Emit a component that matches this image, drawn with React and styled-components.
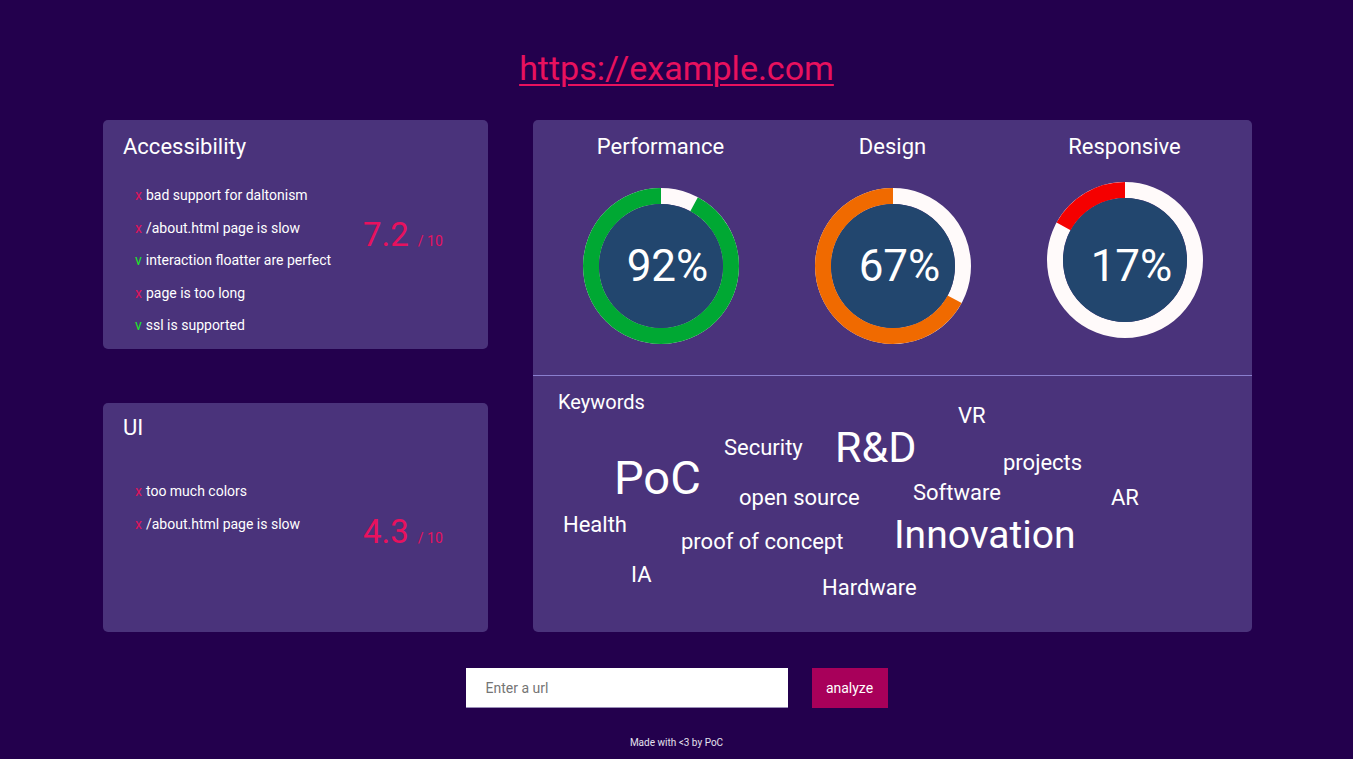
import React from 'react';
import styled, { createGlobalStyle } from 'styled-components';

const GlobalStyle = createGlobalStyle`
    html, body {
        margin: 0;
        padding: 0;
        background: #23004d;
        font-family: Roboto, "Liberation Sans", sans-serif;
        color: #ffffff;
    }
`;

const Page = styled.div`
    height: 759px;
    box-sizing: border-box;
    overflow: hidden;
    padding-top: 48px;
    display: flex;
    flex-direction: column;
    align-items: center;
`;

const SiteLink = styled.a`
    font-size: 34px;
    line-height: 40px;
    color: #e8115e;
    text-decoration: underline;
    text-underline-offset: 4px;
    text-decoration-thickness: 2px;
`;

const Main = styled.main`
    margin-top: 32px;
    margin-left: 2px;
    display: grid;
    grid-template-columns: 385px 719px;
    gap: 45px;
`;

const Column = styled.div`
    display: flex;
    flex-direction: column;
    gap: 54px;
`;

const Card = styled.section`
    background: #4a337b;
    border-radius: 5px;
    height: ${(p) => p.height}px;
    box-sizing: border-box;
`;

const ScoreCard = styled(Card)`
    padding: ${(p) => p.pad}px 20px 0 20px;
`;

const CardTitle = styled.h2`
    margin: 0;
    font-size: 22px;
    font-weight: 400;
    line-height: 26px;
`;

const CardBody = styled.div`
    display: flex;
    margin-top: ${(p) => p.offset}px;
    padding-left: 12px;
`;

const List = styled.ul`
    list-style: none;
    margin: 0;
    padding: 0;
    width: 228px;
`;

const Item = styled.li`
    font-size: 14px;
    line-height: 32.5px;
    white-space: nowrap;
`;

const Mark = styled.span`
    color: ${(p) => (p.ok ? '#1ee82a' : '#e0135c')};
    margin-right: 4px;
`;

const Score = styled.div`
    margin-top: ${(p) => p.drop}px;
    color: #e8115e;
    display: flex;
    align-items: baseline;
    height: 40px;
`;

const ScoreValue = styled.span`
    font-size: 33px;
    line-height: 40px;
`;

const ScoreMax = styled.span`
    font-size: 14px;
    margin-left: 9px;
`;

const RightCard = styled(Card)`
    display: flex;
    flex-direction: column;
`;

const Gauges = styled.div`
    display: flex;
    justify-content: center;
    height: 255px;
    border-bottom: 1px solid #8a7fcf;
`;

const GaugeCol = styled.div`
    width: 232px;
    display: flex;
    flex-direction: column;
    align-items: center;
    padding-top: 14px;
`;

const GaugeTitle = styled.h3`
    margin: 0;
    font-size: 22px;
    font-weight: 400;
    line-height: 26px;
`;

const Dial = styled.div`
    position: relative;
    width: 156px;
    height: 156px;
    margin-top: ${(p) => 28 - p.lift}px;
`;

const DialText = styled.div`
    position: absolute;
    inset: 0;
    display: flex;
    align-items: center;
    justify-content: center;
    padding-left: 14px;
    padding-top: ${(p) => p.lift * 2}px;
    font-size: 44px;
    font-weight: 400;
`;

const Keywords = styled.div`
    position: relative;
    flex: 1;
    padding: 14px 25px;
`;

const KeywordsTitle = styled.h3`
    margin: 0;
    font-size: 20px;
    font-weight: 400;
    line-height: 24px;
`;

const Word = styled.span`
    position: absolute;
    left: ${(p) => p.x}px;
    top: ${(p) => p.y}px;
    font-size: ${(p) => p.size}px;
    line-height: 1;
    white-space: nowrap;
`;

const Form = styled.form`
    margin-top: 36px;
    display: flex;
    gap: 24px;
`;

const UrlInput = styled.input`
    width: 322px;
    height: 40px;
    box-sizing: border-box;
    border: none;
    border-bottom: 1px solid #9a8fb8;
    padding: 0 20px;
    font-family: Roboto, "Liberation Sans", sans-serif;
    font-size: 14px;
    color: #333;
    outline: none;

    &::placeholder {
        color: #757575;
    }
`;

const AnalyzeButton = styled.button`
    width: 76px;
    height: 40px;
    border: none;
    background: #a8005a;
    color: #fff;
    font-family: Roboto, "Liberation Sans", sans-serif;
    font-size: 14px;
    padding: 0;
`;

const Footer = styled.footer`
    margin-top: 28px;
    font-size: 10px;
    line-height: 14px;
    color: #e4e0ee;
`;

const accessibility = [
    { ok: false, text: 'bad support for daltonism' },
    { ok: false, text: '/about.html page is slow' },
    { ok: true, text: 'interaction floatter are perfect' },
    { ok: false, text: 'page is too long' },
    { ok: true, text: 'ssl is supported' },
];

const ui = [
    { ok: false, text: 'too much colors' },
    { ok: false, text: '/about.html page is slow' },
];

const gauges = [
    { title: 'Performance', value: 92, color: '#00a833', lift: 0 },
    { title: 'Design', value: 67, color: '#f06a00', lift: 0 },
    { title: 'Responsive', value: 17, color: '#f50000', lift: 6 },
];

const words = [
    { text: 'VR', x: 425, y: 29, size: 22 },
    { text: 'Security', x: 191, y: 61, size: 22 },
    { text: 'R&D', x: 302, y: 50, size: 43 },
    { text: 'PoC', x: 81, y: 78, size: 47 },
    { text: 'projects', x: 470, y: 76, size: 22 },
    { text: 'open source', x: 206, y: 111, size: 22 },
    { text: 'Software', x: 380, y: 106, size: 22 },
    { text: 'AR', x: 578, y: 111, size: 22 },
    { text: 'Health', x: 30, y: 138, size: 22 },
    { text: 'Innovation', x: 361, y: 140, size: 39 },
    { text: 'proof of concept', x: 148, y: 155, size: 22 },
    { text: 'IA', x: 98, y: 188, size: 22 },
    { text: 'Hardware', x: 289, y: 201, size: 22 },
];

const Ring = ({ value, color }) => {
    const r = 70;
    const c = 2 * Math.PI * r;
    const len = (c * value) / 100;
    return (
        <svg width="156" height="156" viewBox="0 0 156 156">
            <circle cx="78" cy="78" r={r} fill="none" stroke="#fffafa" strokeWidth="16" />
            <circle
                cx="78"
                cy="78"
                r={r}
                fill="none"
                stroke={color}
                strokeWidth="16"
                strokeDasharray={`${len} ${c}`}
                transform="rotate(-90 78 78) scale(1 -1) translate(0 -156)"
            />
            <circle cx="78" cy="78" r="62" fill="#22466e" />
        </svg>
    );
};

const ScoreBlock = ({ title, items, score, pad, offset, drop }) => (
    <ScoreCard height={229} pad={pad}>
        <CardTitle>{title}</CardTitle>
        <CardBody offset={offset}>
            <List>
                {items.map((v, i) => (
                    <Item key={i}>
                        <Mark ok={v.ok}>{v.ok ? 'v' : 'x'}</Mark>
                        {v.text}
                    </Item>
                ))}
            </List>
            <Score drop={drop}>
                <ScoreValue>{score}</ScoreValue>
                <ScoreMax>/ 10</ScoreMax>
            </Score>
        </CardBody>
    </ScoreCard>
);

const App = () => (
    <>
        <GlobalStyle />
        <Page>
            <SiteLink href="#">https://example.com</SiteLink>
            <Main>
                <Column>
                    <ScoreBlock
                        title="Accessibility"
                        items={accessibility}
                        score="7.2"
                        pad={14}
                        offset={19}
                        drop={36}
                    />
                    <ScoreBlock title="UI" items={ui} score="4.3" pad={12} offset={34} drop={37} />
                </Column>
                <RightCard height={512}>
                    <Gauges>
                        {gauges.map((g) => (
                            <GaugeCol key={g.title}>
                                <GaugeTitle>{g.title}</GaugeTitle>
                                <Dial lift={g.lift}>
                                    <Ring value={g.value} color={g.color} />
                                    <DialText lift={g.lift}>{g.value}%</DialText>
                                </Dial>
                            </GaugeCol>
                        ))}
                    </Gauges>
                    <Keywords>
                        <KeywordsTitle>Keywords</KeywordsTitle>
                        {words.map((w) => (
                            <Word key={w.text} x={w.x} y={w.y} size={w.size}>
                                {w.text}
                            </Word>
                        ))}
                    </Keywords>
                </RightCard>
            </Main>
            <Form onSubmit={(e) => e.preventDefault()}>
                <UrlInput placeholder="Enter a url" />
                <AnalyzeButton type="submit">analyze</AnalyzeButton>
            </Form>
            <Footer>Made with &lt;3 by PoC</Footer>
        </Page>
    </>
);

export default App;
